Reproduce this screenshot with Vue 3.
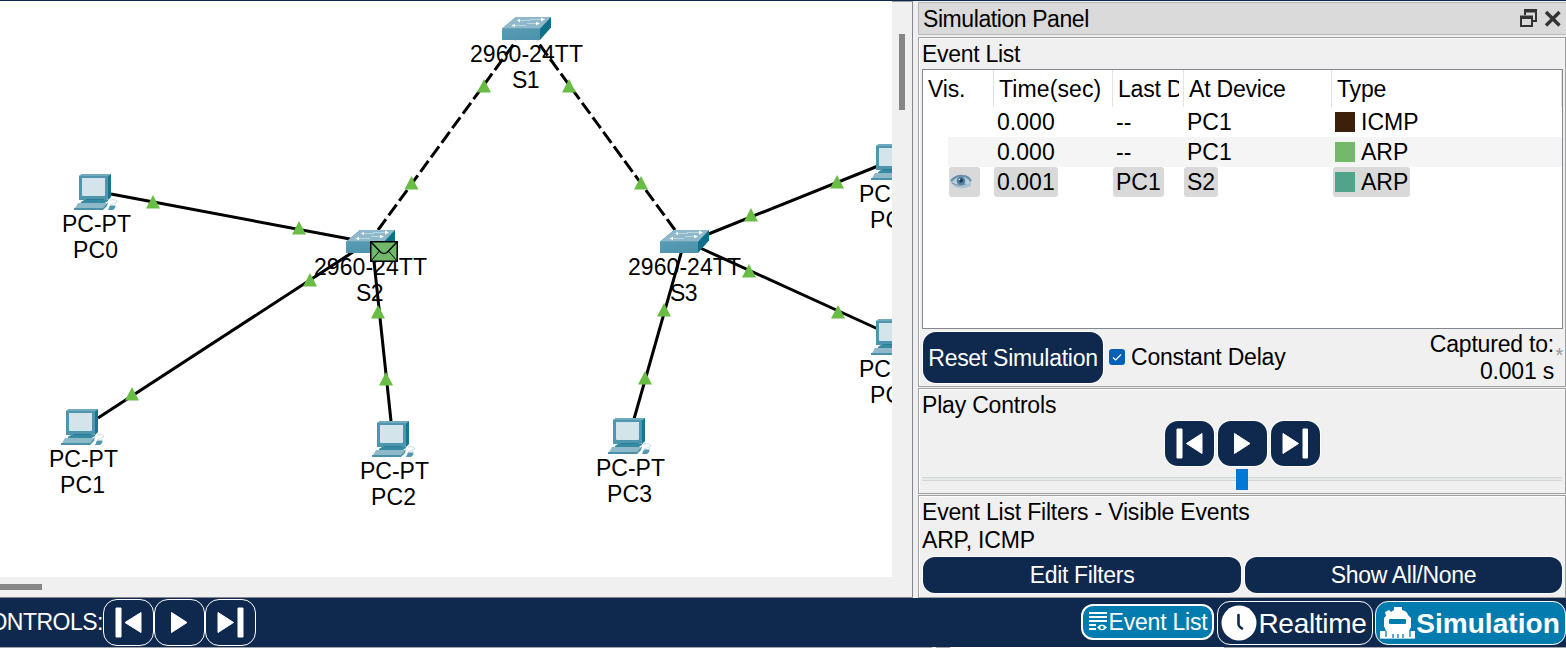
<script setup>
const labelWidths = { switch: 113, pc: 69 }

const links = [
  { x1: 111, y1: 194, x2: 350, y2: 239 },
  { x1: 98, y1: 418, x2: 353, y2: 252 },
  { x1: 373, y1: 252, x2: 391, y2: 421 },
  { x1: 378, y1: 230, x2: 516, y2: 41, dashed: true },
  { x1: 675, y1: 230, x2: 537, y2: 41, dashed: true },
  { x1: 682, y1: 250, x2: 634, y2: 419 },
  { x1: 706, y1: 235, x2: 878, y2: 166 },
  { x1: 698, y1: 247, x2: 878, y2: 329 },
]

const ports = [
  [484, 86], [569, 86], [411.5, 183], [641, 183], [153, 202], [299, 228],
  [132, 394], [310, 280], [378, 312], [386, 379], [664, 310], [645, 378],
  [751, 215], [837, 182], [749, 271], [838, 312],
]

const switches = [
  { name: 'S1', x: 502, y: 17, lx: 470, ly: 61.5, nx: 512 },
  { name: 'S2', x: 346, y: 230, lx: 314, ly: 274.5, nx: 356 },
  { name: 'S3', x: 660, y: 230, lx: 628, ly: 274.5, nx: 670 },
]

const pcs = [
  { name: 'PC0', x: 74, y: 174 },
  { name: 'PC1', x: 61, y: 409 },
  { name: 'PC2', x: 372, y: 421 },
  { name: 'PC3', x: 608, y: 418 },
  { name: 'PC4', x: 871, y: 144 },
  { name: 'PC5', x: 871, y: 319 },
]

const events = [
  { time: '0.000', last: '--', at: 'PC1', type: 'ICMP', cls: 'icmp' },
  { time: '0.000', last: '--', at: 'PC1', type: 'ARP', cls: 'arp', alt: true },
  { time: '0.001', last: 'PC1', at: 'S2', type: 'ARP', cls: 'arp2', selected: true },
]

const playIcons = ['back', 'play', 'forward']
</script>

<template>
  <div class="app">
    <div class="topline"></div>
    <div class="main">
      <section class="workspace">
        <div class="upper">
          <svg class="canvas" width="892" height="576" viewBox="0 1 892 576">
            <defs>
              <linearGradient id="front" x1="0" x2="1" y1="0" y2="1">
                <stop offset="0" stop-color="#589db5" />
                <stop offset="1" stop-color="#4c91aa" />
              </linearGradient>
              <g id="switch-icon">
                <path d="M0 11.7 14 0H49V10.500L38 23H0Z" fill="#0d7088" />
                <path d="M0 11.700 14 0H49L38 11.700Z" fill="#8fb9ca" />
                <path d="M0 11.700H38V23H0Z" fill="url(#front)" />
                <path d="M16 3.500H28M27 2.500H41M11 8.500H24M25 6.500H37" stroke="#b9d7e2" stroke-width="1" />
                <path d="M15 3.500 18 1.800V5.200ZM43 2.400 39 .6V4.400ZM9.500 8.500 13 6.800V10.200ZM38 6.500 34 4.800V8.200Z" fill="#fff" />
              </g>
              <g id="pc-icon">
                <path d="M5 2 8 0H37V23L33 26H5Z" fill="#4f95ae" />
                <path d="M34 3 37 0V23L34 26Z" fill="#14768f" />
                <path d="M5 2 8 0H37L34 2Z" fill="#71a9bd" />
                <path d="M8 4H31V21Q31 22 30 22H9Q8 22 8 21Z" fill="#d3e4eb" />
                <path d="M12 25H30L28 28H13Z" fill="#267e95" />
                <path d="M7 28 10 26H34V27L29 30H7Z" fill="#358ba2" />
                <path d="M4 29H33L28 36H0Z" fill="#8eb9c8" />
                <path d="M0 34H29L34 28 33 32 29 36H0Z" fill="#4991a9" />
                <path d="M36 31.500H41V34L39 36H34Z" fill="#5098b0" />
                <path d="M36 26Q43 25 43 28Q39 30 36 31M41 30 42 34" fill="none" stroke="#c9dde5" stroke-width="1" />
              </g>
            </defs>
            <rect x="0" y="1" width="892" height="576" fill="#fff" />
            <g class="label">
              <template v-for="s in switches" :key="s.name">
                <text :x="s.lx" :y="s.ly" :textLength="labelWidths.switch">2960-24TT</text>
                <text :x="s.nx" :y="s.ly + 26" textLength="27.500">{{ s.name }}</text>
              </template>
              <template v-for="p in pcs" :key="p.name">
                <text :x="p.x - 12" :y="p.y + 57.800" :textLength="labelWidths.pc">PC-PT</text>
                <text :x="p.x - 1" :y="p.y + 83.800" textLength="45">{{ p.name }}</text>
              </template>
            </g>
            <line v-for="(l, i) in links" :key="i" :x1="l.x1" :y1="l.y1" :x2="l.x2" :y2="l.y2" class="link" :class="{ dashed: l.dashed }" />
            <use v-for="p in pcs" :key="p.name" href="#pc-icon" :x="p.x" :y="p.y" />
            <use v-for="s in switches" :key="s.name" href="#switch-icon" :x="s.x" :y="s.y" />
            <path v-for="(t, i) in ports" :key="i" :d="`M${t[0]} ${t[1] - 7}l7 13.500h-14z`" fill="#69bd45" />
            <g transform="translate(370 241)">
              <rect x=".75" y=".75" width="26.500" height="19.500" fill="#71b86a" stroke="#000" stroke-width="1.500" />
              <path d="M1 1 11 11.500Q14 13.500 17 11.500L27 1" fill="none" stroke="#000" stroke-width="1.500" />
              <path d="M1 20 9.500 10M27 20 18.500 10" fill="none" stroke="#000" stroke-width="1" />
            </g>
          </svg>
          <div class="vscroll"><i></i></div>
        </div>
        <div class="hscroll"><i></i></div>
      </section>

      <aside class="panel">
        <header class="title">
          <span>Simulation Panel</span>
          <svg width="44" height="20" viewBox="0 0 44 20">
            <path d="M5 6V1H16V12H12" fill="none" stroke="#333" stroke-width="2" />
            <path d="M4 0H17V3.500H4Z" fill="#333" />
            <path d="M1 8H12V17H1Z" fill="none" stroke="#333" stroke-width="2" />
            <path d="M0 6.500H13V10H0Z" fill="#333" />
            <path d="M26 3 39.500 16.500M39.500 3 26 16.500" stroke="#333" stroke-width="3.400" />
          </svg>
        </header>

        <section class="frame list-frame">
          <h3>Event List</h3>
          <div class="table">
            <div class="row head">
              <span>Vis.</span><span class="hl">Time(sec)</span><span><em>Last Device</em></span><span>At Device</span><span>Type</span>
            </div>
            <div v-for="(e, i) in events" :key="i" class="row" :class="{ alt: e.alt, selected: e.selected }">
              <span class="vis">
                <b v-if="e.selected">
                  <svg width="22" height="16" viewBox="0 0 22 16">
                    <path d="M1 7Q5 1 11 1Q18 1 21 5V12Q16 15 9 14Q4 13 1 9Z" fill="#a9c2d5" />
                    <path d="M1 7Q6 1 13 2Q18 2 21 7" fill="none" stroke="#668eac" stroke-width="2" />
                    <path d="M2 9Q8 13 15 11L20 9Q17 4 11 4Q6 4 2 9Z" fill="#bdd0de" />
                    <circle cx="11" cy="7" r="4.300" fill="#537e9f" />
                    <circle cx="11" cy="6.500" r="2" fill="#173b59" />
                    <circle cx="9.500" cy="5.500" r=".8" fill="#fff" />
                    <path d="M2 9Q9 13 16 10" fill="none" stroke="#718fa5" />
                  </svg>
                </b>
              </span>
              <span><b class="num">{{ e.time }}</b></span>
              <span><b>{{ e.last }}</b></span>
              <span><b>{{ e.at }}</b></span>
              <span><b class="type"><i :class="e.cls"></i>{{ e.type }}</b></span>
            </div>
          </div>
          <div class="below">
            <button class="btn reset">Reset Simulation</button>
            <span class="check"><svg width="16" height="16" viewBox="0 0 16 16"><path d="M4 8.500 6.700 11 12 5.500" fill="none" stroke="#fff" stroke-width="1.100" /></svg></span>
            <span class="delay">Constant Delay</span>
            <div class="captured">Captured to:<br>0.001 s</div>
            <span class="star">*</span>
          </div>
        </section>

        <section class="frame play-frame">
          <h3>Play Controls</h3>
          <div class="plays">
            <button v-for="k in playIcons" :key="k" class="btn">
              <svg width="49" height="45" viewBox="0 0 49 45">
                <g fill="#fff" stroke="#fff" stroke-linejoin="round">
                  <path v-if="k === 'back'" d="M12 8H17V37H12ZM21.500 22.500 37 12.500V32.500Z" />
                  <path v-if="k === 'play'" d="M16.500 12.500 32 22.500 16.500 32.500Z" />
                  <path v-if="k === 'forward'" d="M12 12.500 27.500 22.500 12 32.500ZM32 8H36.500V37H32Z" />
                </g>
              </svg>
            </button>
          </div>
          <div class="slider"><i></i></div>
        </section>

        <section class="frame filter-frame">
          <h3>Event List Filters - Visible Events</h3>
          <p>ARP, ICMP</p>
          <div class="filters">
            <button class="btn">Edit Filters</button>
            <button class="btn">Show All/None</button>
          </div>
        </section>
      </aside>
    </div>

    <footer class="bar">
      <div class="controls-label"><span>CONTROLS:</span></div>
      <button v-for="k in playIcons" :key="k" class="mini">
        <svg width="49" height="45" viewBox="0 0 49 45">
          <g fill="#fff" stroke="#fff" stroke-linejoin="round">
            <path v-if="k === 'back'" d="M12 8H17V37H12ZM21 22.500 37 12.500V32.500Z" />
            <path v-if="k === 'play'" d="M16.500 12.500 32 22.500 16.500 32.500Z" />
            <path v-if="k === 'forward'" d="M12 12.500 27.500 22.500 12 32.500ZM32 8H37V37H32Z" />
          </g>
        </svg>
      </button>
      <div class="spacer"></div>
      <button class="evlist">
        <svg width="20" height="22" viewBox="0 0 20 22">
          <path d="M1 2H19M1 6H19M1 10H19M1 14H8M1 18H8" stroke="#fff" stroke-width="2" />
          <path d="M9 16.500Q14 10.500 19 16.500Q14 22 9 16.500Z" fill="#fff" /><circle cx="14" cy="16.500" r="1.700" fill="#027cae" />
        </svg>
        <span>Event List</span>
      </button>
      <button class="realtime">
        <svg width="36" height="36" viewBox="0 0 36 36">
          <circle cx="18" cy="18" r="17.500" fill="#fff" />
          <path d="M17.500 10V19Q17.500 21 19 22L21 23.500" fill="none" stroke="#0e294e" stroke-width="2.600" stroke-linecap="round" />
        </svg>
        <span>Realtime</span>
      </button>
      <button class="simulation">
        <svg width="36" height="34" viewBox="0 0 36 34">
          <path d="M14 1H22V4Q27 5 28 9L31 12V21L29 25H35V33H0V25H6L4 20V12L6 10L5 6L9 4L11 6L14 4Z" fill="#fff" />
          <rect x="9" y="13" width="17" height="5" rx="1" fill="#027cae" />
          <path d="M6 25V31M30 25V31M13 28V32M18 28V32M23 28V32" stroke="#0c7eae" stroke-width="1.300" />
          <path d="M0 32.500H35" stroke="#a5cfe1" />
        </svg>
        <span>Simulation</span>
      </button>
    </footer>
    <div class="bottomline"></div>
  </div>
</template>

<style>
body { margin: 0; overflow: hidden; }
</style>

<style scoped>
* { box-sizing: border-box; }
.app { width: 1566px; height: 649px; display: flex; flex-direction: column; background: #f0f0f0; font: 23px/26px "Liberation Sans", Arial, sans-serif; color: #000; overflow: hidden; white-space: nowrap; letter-spacing: -.2px; }
button { font: inherit; letter-spacing: inherit; color: #fff; padding: 0; margin: 0; border: 0; display: flex; align-items: center; justify-content: center; flex: none; }
svg { display: block; flex: none; }
.topline { height: 1px; background: #0e284e; flex: none; }
.main { height: 597px; display: flex; flex: none; }
.workspace { width: 913px; border-right: 1px solid #828790; border-top: 1px solid #96999e; border-bottom: 1px solid #828790; display: flex; flex-direction: column; }
.upper { display: flex; height: 575px; }
.canvas { margin-top: -1px; }
.label { font-size: 23px; letter-spacing: 0; }
.link { stroke: #000; stroke-width: 3; }
.dashed { stroke-dasharray: 13.5 4.5; }
.vscroll { padding: 32px 0 0 7px; }
.vscroll i { display: block; width: 6px; height: 76px; background: #868686; }
.hscroll { padding-top: 7px; }
.hscroll i { display: block; width: 42px; height: 6px; background: #868686; }

.panel { margin-left: 5px; width: 648px; display: flex; flex-direction: column; }
.title { margin-top: 1px; height: 33px; flex: none; background: #dadada; border: 1px solid #b8b8b8; border-right: 0; display: flex; justify-content: space-between; padding: 3px 2px 0 4px; letter-spacing: -.42px; }
.title svg { margin-top: 3px; }
.frame { border: 1px solid #a0a0a0; box-shadow: inset 1px 1px #fff; flex: none; padding: 0 2px 0 3px; display: flex; flex-direction: column; }
h3, p { font: inherit; margin: 0; }
.list-frame { margin-top: 2px; height: 350px; }
.list-frame h3 { height: 31px; padding-top: 3px; letter-spacing: -.3px; }
.table { height: 260px; background: #fff; border: 1px solid #828790; flex: none; overflow: hidden; }
.row { height: 30px; display: grid; grid-template-columns: 71px 119px 71px 148px 1fr; }
.head { height: 37px; }
.head span { border-right: 1px solid #e3e3e3; padding: 6px 0 0 5px; overflow: hidden; }
.head em { display: block; font-style: normal; width: 61px; overflow: hidden; }
.head .hl { letter-spacing: .1px; }
.row.alt { background: linear-gradient(to right, #fff 25px, #f5f5f5 25px); }
.row b { font-weight: normal; display: inline-flex; align-items: center; height: 30px; padding: 0 3px; border-radius: 3px; vertical-align: top; letter-spacing: 0; }
.row .num { letter-spacing: .05px; }
.row:not(.head) > span:nth-child(5) { padding-left: 1px; }
.row.selected b { background: #d9d9d9; }
.row .vis { padding-left: 26px; }
.row .vis b { width: 31px; padding: 0 1px; }
.row .type { padding: 0 2px; }
.type i { width: 20px; height: 20px; margin-right: 6px; }
.icmp { background: #3c200c; }
.arp { background: #74b86b; }
.arp2 { background: #52a38b; }
.btn { background: #0f294e; border-radius: 13px; box-shadow: 0 0 0 1px #fff; }
.below { display: flex; position: relative; height: 57px; }
.reset { width: 180px; height: 51px; margin: 3px 0 0 1px; letter-spacing: -.28px; }
.check { width: 16px; height: 16px; border-radius: 3px; background: #0561b8; margin: 20px 0 0 6px; }
.delay { margin: 15px 0 0 6px; }
.captured { margin-left: auto; margin-right: 9px; padding-top: 2px; line-height: 27px; text-align: right; }
.star { position: absolute; right: 0; top: 13px; font-size: 20px; color: #999; }
.play-frame { height: 106px; margin-top: 1px; }
.play-frame h3 { height: 32px; padding-top: 3px; }
.plays { display: flex; gap: 4px; padding-left: 243px; height: 49px; }
.plays .btn { width: 49px; height: 45px; }
.slider { height: 21px; display: flex; align-items: center; justify-content: center; margin: -1px 1px 0 0; background: linear-gradient(#d2d6d6 0 0) 0 8px / 100% 1px no-repeat, linear-gradient(#e7eaea 0 0) 0 9px / 100% 2px no-repeat, linear-gradient(#d2d6d6 0 0) 0 11px / 100% 1px no-repeat; }
.slider i { width: 12px; height: 21px; background: #0078d7; }
.filter-frame { height: 103px; margin-top: 1px; }
.filter-frame h3 { padding-top: 3px; height: 31px; }
.filter-frame p { height: 30px; }
.filters { display: flex; gap: 4px; padding-left: 1px; }
.filters .btn { height: 36px; width: 318px; border-radius: 12px; letter-spacing: -.33px; }
.filters .btn + .btn { width: 317px; }

.bar { height: 49px; flex: none; background: #0f294e; display: flex; align-items: flex-start; color: #fff; }
.controls-label { width: 103px; display: flex; justify-content: flex-end; padding-top: 11px; overflow: hidden; letter-spacing: -.5px; }
.mini { width: 51px; height: 47px; margin-top: 1px; background: transparent; border: 1px solid #fff; border-radius: 14px; }
.spacer { flex: 1; }
.evlist { width: 133px; height: 36px; margin: 6px 3px 0 0; border: 2px solid #fff; border-radius: 12px; background: #027cae; gap: 1px; letter-spacing: -.22px; }
.evlist span { padding-bottom: 1px; }
.realtime { width: 156px; height: 44px; margin: 3px 2px 0 0; border: 1px solid #fff; border-radius: 13px; background: #0f294e; gap: 1px; font-size: 28px; letter-spacing: -.3px; }
.realtime svg { margin-left: -2px; }
.realtime span, .simulation span { padding-top: 1px; }
.simulation { width: 191px; height: 44px; margin-top: 3px; border: 1px solid #fff; border-radius: 13px; background: #027cae; gap: 0; font-size: 28px; font-weight: bold; letter-spacing: .05px; }
.simulation svg { margin-left: -1px; }
.bottomline { height: 2px; flex: none; background: linear-gradient(to right, #a1a5ae 932px, #f0f0f0 932px 936px, #9fa2ad 936px 950px, #fff 950px 1224px, #a4a2ad 1224px) 0 0 / 100% 1px no-repeat, #fff; }
</style>
